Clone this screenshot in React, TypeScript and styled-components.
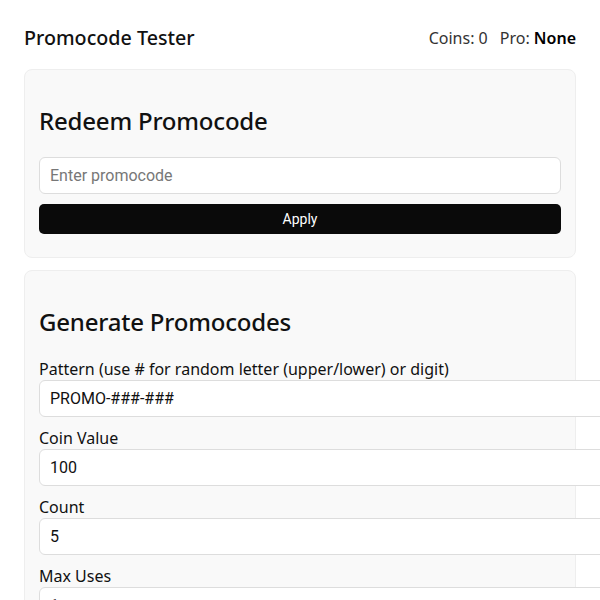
import React, { useState } from 'react';
import styled, { createGlobalStyle } from 'styled-components';

const GlobalStyle = createGlobalStyle`
  html, body {
    margin: 0;
    padding: 0;
    background: #fff;
    overflow-x: hidden;
  }
  body {
    font-family: 'Noto Sans', 'Open Sans', sans-serif;
    color: #111;
  }
`;

const Page = styled.div`
  padding: 24px;
`;

const Header = styled.header`
  display: flex;
  align-items: center;
  justify-content: space-between;
  margin-bottom: 18px;
`;

const Title = styled.h1`
  margin: 0;
  font-size: 19.7px;
  font-weight: 500;
  color: #111;
`;

const Status = styled.div`
  display: flex;
  gap: 12px;
  font-size: 16px;
  color: #333;
`;

const StatusValue = styled.strong`
  font-weight: 600;
  color: #000;
`;

const Card = styled.section`
  background: #f9f9f9;
  border: 1px solid #eee;
  border-radius: 8px;
  padding: 14px;
  margin-bottom: 12px;
`;

const CardTitle = styled.h2`
  margin: 20px 0;
  font-size: 24px;
  font-weight: 500;
  letter-spacing: -0.2px;
  color: #111;
`;

const Label = styled.label`
  display: block;
  font-size: 16px;
  color: #111;
`;

const Input = styled.input<{ $wide?: boolean }>`
  display: block;
  box-sizing: ${(p) => (p.$wide ? 'content-box' : 'border-box')};
  width: ${(p) => (p.$wide ? 'calc(100% + 80px)' : '100%')};
  margin: 0 0 10px;
  padding: 8px 10px;
  border: 1px solid #ddd;
  border-radius: 6px;
  background: #fff;
  font-family: Roboto, 'Liberation Sans', sans-serif;
  font-size: 16px;
  color: #111;
  &::placeholder {
    color: #777;
  }
  &:focus {
    outline: none;
  }
`;

const Button = styled.button`
  display: block;
  width: 100%;
  margin-bottom: 9px;
  padding: 7px 12px;
  border: none;
  border-radius: 5px;
  background: #0a0a0a;
  color: #fff;
  font-family: Roboto, 'Liberation Sans', sans-serif;
  font-size: 14px;
  cursor: pointer;
`;

const fields = [
  { id: 'pattern', label: 'Pattern (use # for random letter (upper/lower) or digit)', value: 'PROMO-###-###' },
  { id: 'coins', label: 'Coin Value', value: '100' },
  { id: 'count', label: 'Count', value: '5' },
  { id: 'uses', label: 'Max Uses', value: '1' },
];

const App: React.FC = () => {
  const [code, setCode] = useState('');

  return (
    <Page>
      <GlobalStyle />
      <Header>
        <Title>Promocode Tester</Title>
        <Status>
          <span>Coins: 0</span>
          <span>
            Pro: <StatusValue>None</StatusValue>
          </span>
        </Status>
      </Header>

      <Card>
        <CardTitle>Redeem Promocode</CardTitle>
        <Input
          type="text"
          placeholder="Enter promocode"
          value={code}
          onChange={(e) => setCode(e.target.value)}
        />
        <Button>Apply</Button>
      </Card>

      <Card>
        <CardTitle>Generate Promocodes</CardTitle>
        {fields.map((f) => (
          <div key={f.id}>
            <Label htmlFor={f.id}>{f.label}</Label>
            <Input $wide id={f.id} type="text" defaultValue={f.value} />
          </div>
        ))}
      </Card>
    </Page>
  );
};

export default App;
